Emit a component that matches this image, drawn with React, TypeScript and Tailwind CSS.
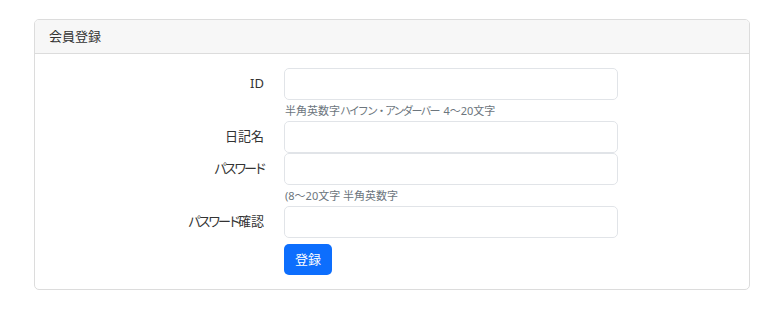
const font = { fontFamily: '"Noto Sans", "Noto Sans CJK JP", sans-serif' };

// narrow katakana, as in the reference font
function Kana({ children, tight = "tracking-[-3px]" }: { children: string; tight?: string }) {
  return <span className={tight}>{children}</span>;
}

function Field({ label }: { label: React.ReactNode }) {
  return (
    <div className="flex items-center">
      <label className="w-[249px] shrink-0 pr-[20px] text-right text-[13px] text-[#333]">{label}</label>
      <input
        type="text"
        className="h-[32px] w-[334px] rounded-[5px] border border-[#e1e4e8] bg-white px-3 text-[13px] outline-none"
      />
    </div>
  );
}

function Help({ children }: { children: React.ReactNode }) {
  return (
    <div className="flex h-[21px] items-center pl-[250px] pt-[2px] text-[11px] text-[#6c757d]">{children}</div>
  );
}

export default function App() {
  return (
    <div className="min-h-[319px] bg-white pt-[19px] pl-[34px]" style={font}>
      <div className="w-[716px] overflow-hidden rounded-[5px] border border-[#dcdcdc]">
        <div className="flex h-[34px] items-center border-b border-[#dcdcdc] bg-[#f7f7f7] px-[14px] text-[13px] text-[#333]">
          会員登録
        </div>
        <div className="pt-[14px] pb-[14px]">
          <Field label="ID" />
          <Help>
            半角英数字<Kana tight="tracking-[-2px]">ハイフン・アンダーバー</Kana>
            <span className="ml-[5px]">4〜20文字</span>
          </Help>
          <Field label="日記名" />
          <Field label={<Kana>パスワード</Kana>} />
          <Help>(8〜20文字 半角英数字</Help>
          <Field label={<><Kana>パスワード</Kana>確認</>} />
          <div className="mt-[6px] pl-[249px]">
            <button className="h-[31px] w-[48px] rounded-[5px] bg-[#0d6efd] text-[13px] text-white">登録</button>
          </div>
        </div>
      </div>
    </div>
  );
}
